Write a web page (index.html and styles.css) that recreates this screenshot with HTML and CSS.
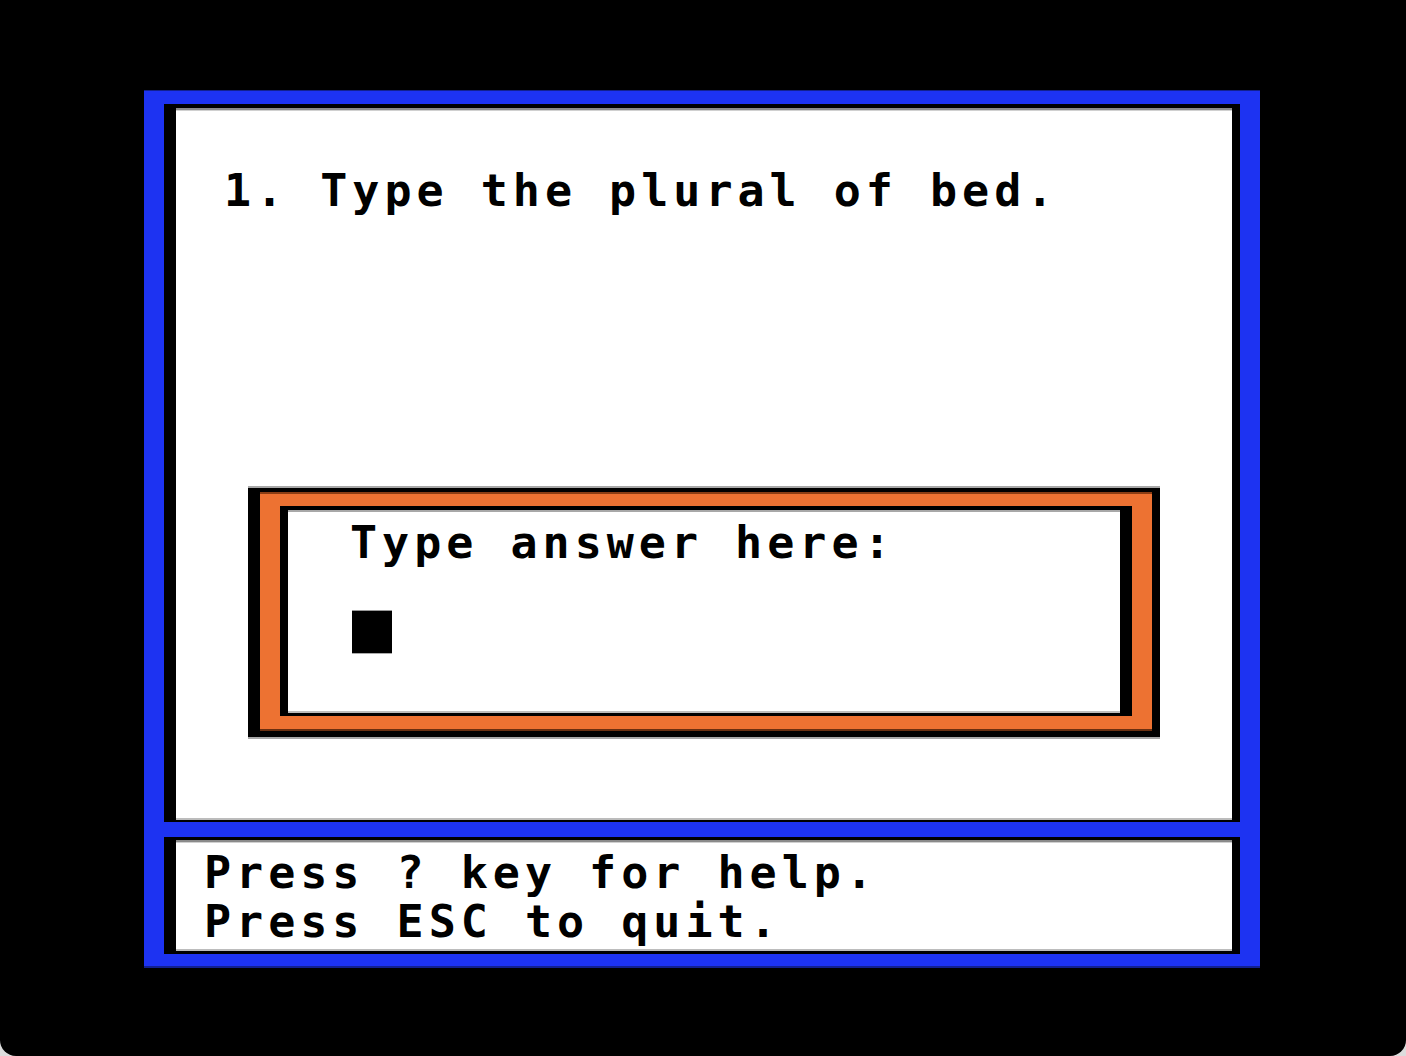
FILE: index.html
```html
<!DOCTYPE html>
<html lang="en">
<head>
<meta charset="utf-8">
<title>Plurals</title>
<link rel="stylesheet" href="styles.css">
</head>
<body>
<div class="screen">
  <div class="frame">
    <div class="well well-main">
      <div class="panel panel-main">
        <p class="line question">1. Type the plural of bed.</p>
        <div class="answer-outer">
          <div class="answer-orange">
            <div class="answer-inner">
              <div class="answer-white">
                <p class="line prompt">Type answer here:</p>
                <div class="cursor"></div>
              </div>
            </div>
          </div>
        </div>
      </div>
    </div>
    <div class="well well-status">
      <div class="panel panel-status">
        <p class="line status">Press ? key for help.</p>
        <p class="line status">Press ESC to quit.</p>
      </div>
    </div>
  </div>
</div>
</body>
</html>
```
FILE: styles.css
```css
html, body {
  margin: 0;
  padding: 0;
  background: #dcdcdc;
}

.screen {
  box-sizing: border-box;
  width: 1406px;
  height: 1056px;
  background: #000;
  border-radius: 0 0 16px 16px;
  padding: 90px 0 0 144px;
}

.frame {
  box-sizing: border-box;
  width: 1116px;
  height: 878px;
  background: #1d33f2;
  padding: 14px 20px;
  display: flex;
  flex-direction: column;
  gap: 15px;
  box-shadow: inset 0 1px 0 #12208f, inset 0 -2px 0 #12208f;
}

.well {
  background: #000;
  box-sizing: border-box;
}

.well-main {
  height: 718px;
  padding: 4px 8px 2px 12px;
}

.well-status {
  height: 117px;
  padding: 3px 8px 3px 12px;
}

.panel {
  background: #fff;
  box-sizing: border-box;
  height: 100%;
  box-shadow: inset 0 2px 0 #8a8a8a, inset 0 3px 0 #d0d0d0, inset 0 -2px 0 #bcbcbc;
}

.panel-main {
  padding: 58px 0 0 48px;
}

.panel-status {
  padding: 8px 0 0 28px;
}

.line {
  margin: 0;
  font-family: "DejaVu Sans Mono", "Liberation Mono", monospace;
  font-weight: bold;
  font-size: 45px;
  line-height: 49px;
  letter-spacing: 5px;
  color: #000;
  white-space: pre;
}

.answer-outer {
  box-sizing: border-box;
  width: 912px;
  height: 249px;
  margin: 273px 0 0 24px;
  background: #000;
  padding: 4px 8px 6px 12px;
  box-shadow: 0 -2px 0 #a8a8a8, 0 2px 0 #a8a8a8;
}

.answer-orange {
  box-sizing: border-box;
  height: 100%;
  background: #ed7232;
  padding: 14px 20px 15px 20px;
  box-shadow: inset 0 2px 0 #8a3d14, inset 0 -2px 0 #6a2f10;
}

.answer-inner {
  box-sizing: border-box;
  height: 100%;
  background: #000;
  padding: 4px 12px 3px 8px;
}

.answer-white {
  box-sizing: border-box;
  height: 100%;
  background: #fff;
  padding: 8px 0 0 62px;
  box-shadow: inset 0 2px 0 #a8a8a8, inset 0 -2px 0 #bcbcbc;
}

.cursor {
  width: 40px;
  height: 42px;
  margin: 44px 0 0 2px;
  background: #000;
  box-shadow: 0 -1px 0 #999, 0 1px 0 #aaa;
}
```
